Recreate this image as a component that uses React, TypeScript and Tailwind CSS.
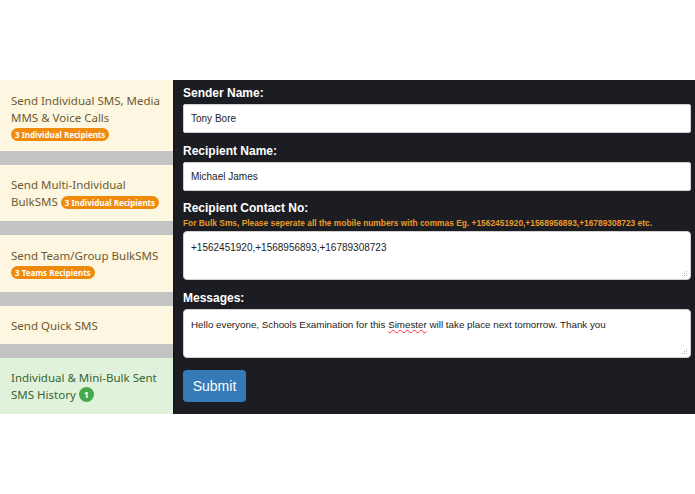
const sideFont = { fontFamily: '"Comic Sans MS", "Noto Sans", sans-serif' };

function Grip() {
  return (
    <svg className="absolute bottom-[2px] right-[2px]" width="7" height="7" viewBox="0 0 7 7">
      <g fill="#b8b8b8">
        <rect x="5" y="1" width="1" height="1" />
        <rect x="3" y="3" width="1" height="1" />
        <rect x="5" y="3" width="1" height="1" />
        <rect x="1" y="5" width="1" height="1" />
        <rect x="3" y="5" width="1" height="1" />
        <rect x="5" y="5" width="1" height="1" />
      </g>
    </svg>
  );
}

function Badge({ children }: { children: React.ReactNode }) {
  return (
    <span className="inline-block rounded-full bg-[#f08a0c] px-[4px] text-[8px] leading-[13px] font-bold text-white align-middle whitespace-nowrap">
      {children}
    </span>
  );
}

function SideItem({
  children,
  green = false,
  className = ""
}: {
  children: React.ReactNode;
  green?: boolean;
  className?: string;
}) {
  return (
    <div
      className={`flex flex-col justify-center px-[11px] text-[11.5px] leading-[17px] whitespace-nowrap ${
        green ? "bg-[#e1f2dc] text-[#36652f]" : "bg-[#fdf6e0] text-[#6f5a2e]"
      } ${className}`}
      style={sideFont}
    >
      {children}
    </div>
  );
}

function Sep() {
  return <div className="h-[14px] bg-[#c3c3c3]" />;
}

function Field({ label, children }: { label: string; children: React.ReactNode }) {
  return (
    <div className="flex flex-col">
      <div className="text-[12px] font-bold text-white leading-[14px] mb-[4px]">{label}</div>
      {children}
    </div>
  );
}

export default function App() {
  return (
    <div className="w-[695px] h-[494px] bg-white" style={{ fontFamily: '"Liberation Sans", Arial, sans-serif' }}>
      <div className="h-[80px]" />
      <div className="flex h-[334px]">
        <div className="w-[175px] flex flex-col border-r-2 border-[#15171b]">
          <SideItem className="h-[71px] pt-[2px]">
            <div>Send Individual SMS, Media</div>
            <div>MMS &amp; Voice Calls</div>
            <div className="leading-[14px]">
              <Badge>3 Individual Recipients</Badge>
            </div>
          </SideItem>
          <Sep />
          <SideItem className="h-[56px]">
            <div>Send Multi-Individual</div>
            <div>
              BulkSMS <Badge>3 Individual Recipients</Badge>
            </div>
          </SideItem>
          <Sep />
          <SideItem className="h-[57px]">
            <div>Send Team/Group BulkSMS</div>
            <div className="leading-[16px]">
              <Badge>3 Teams Recipients</Badge>
            </div>
          </SideItem>
          <Sep />
          <SideItem className="h-[38px]">
            <div>Send Quick SMS</div>
          </SideItem>
          <Sep />
          <SideItem green className="flex-1">
            <div>Individual &amp; Mini-Bulk Sent</div>
            <div className="flex items-center gap-[3px]">
              SMS History
              <span className="inline-flex h-[15px] w-[15px] items-center justify-center rounded-full bg-[#45a84a] text-[9px] font-bold text-white">
                1
              </span>
            </div>
          </SideItem>
        </div>
        <div className="flex-1 bg-[#1b1d22] pl-[8px] pr-[4px] pt-[6px] flex flex-col">
          <Field label="Sender Name:">
            <div className="h-[29px] rounded-[2px] bg-white border border-[#d0d0d0] flex items-center px-[7px] text-[10px] text-[#222]">
              Tony Bore
            </div>
          </Field>
          <div className="h-[11px]" />
          <Field label="Recipient Name:">
            <div className="h-[29px] rounded-[2px] bg-white border border-[#d0d0d0] flex items-center px-[7px] text-[10px] text-[#222]">
              Michael James
            </div>
          </Field>
          <div className="h-[10px]" />
          <div className="flex flex-col">
            <div className="text-[12px] font-bold text-white leading-[14px]">Recipient Contact No:</div>
            <div className="text-[8.4px] font-bold text-[#e89a2a] leading-[12px] mt-[2px] mb-[2px] whitespace-nowrap">
              For Bulk Sms, Please seperate all the mobile numbers with commas Eg. +1562451920,+1568956893,+16789308723 etc.
            </div>
            <div className="relative h-[49px] rounded-[4px] bg-white border border-[#d0d0d0] px-[7px] pt-[8px] text-[10px] text-[#222]">
              +1562451920,+1568956893,+16789308723
              <Grip />
            </div>
          </div>
          <div className="h-[11px]" />
          <Field label="Messages:">
            <div className="relative h-[49px] rounded-[4px] bg-white border border-[#d0d0d0] px-[7px] pt-[8px] text-[9.8px] text-[#222]">
              Hello everyone, Schools Examination for this{" "}
              <span className="underline decoration-wavy decoration-red-500 decoration-1">Simester</span> will take place
              next tomorrow. Thank you
              <Grip />
            </div>
          </Field>
          <div className="mt-[12px]">
            <button className="h-[32px] w-[63px] rounded-[4px] bg-[#337ab7] text-[14px] text-white">Submit</button>
          </div>
        </div>
      </div>
    </div>
  );
}
